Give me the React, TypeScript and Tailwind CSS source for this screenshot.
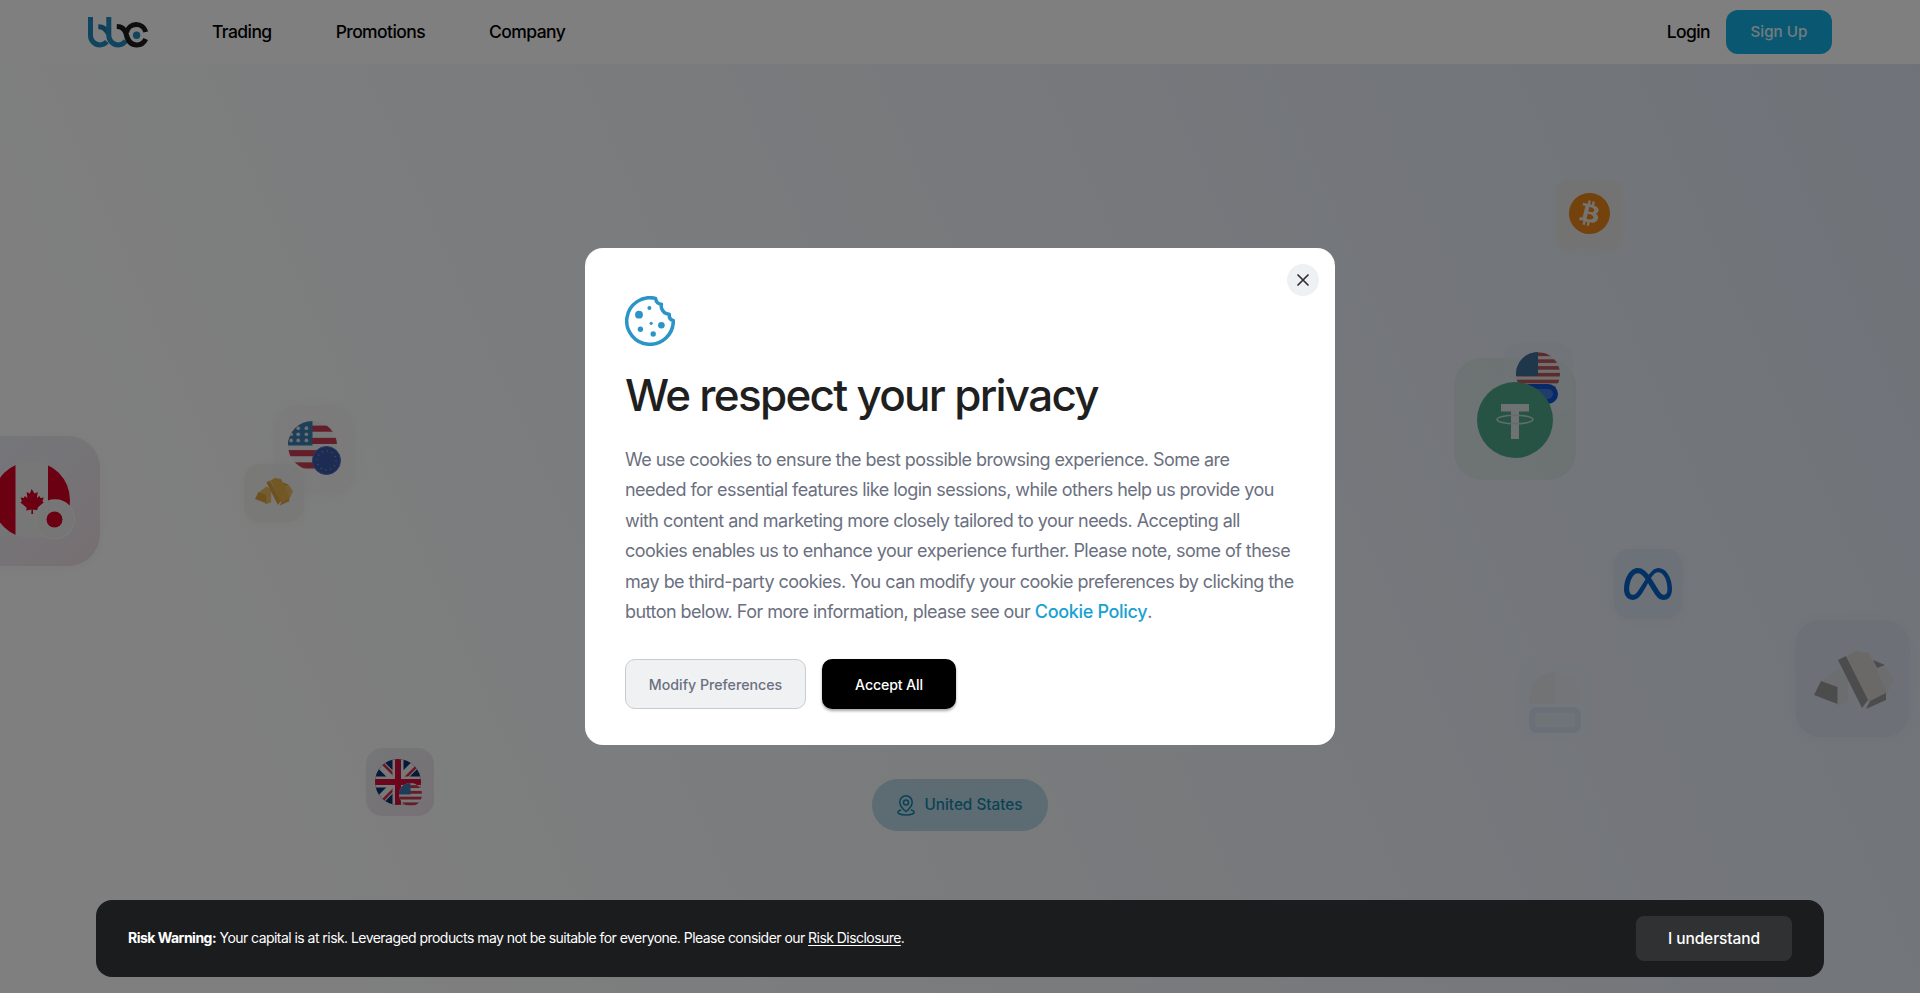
import { useState, type ReactNode } from "react";
import { SiBitcoin, SiMeta } from "react-icons/si";

const NAV = ["Trading", "Promotions", "Company"];

function Logo() {
  return (
    <svg width="60" height="31" viewBox="0 0 60 31" fill="none" strokeWidth="5">
      <g stroke="#2389bd">
        <path d="M2.5 0v18.400a9.500 9.500 0 0 0 9.500 9.500c2.600 0 5-1 6.900-3.200" />
        <path d="M10.300 9.700c4.900 0 8.200 2.400 10 7.300" stroke="#1f7ba9" />
        <path d="M20.800 0v18.400a9.500 9.500 0 0 0 9.500 9.500c3.300 0 5.900-1.500 7.600-4.200" />
      </g>
      <g stroke="#1d1d1d">
        <path d="M28.800 9.500c5.600 0 8.200 3.200 9.400 7.600 1.400 6.500 4.500 10.800 10.500 10.800 4.300 0 7.500-2.500 9-6" />
        <path d="M38.600 15.400a9.800 9.800 0 0 1 19.100-.4" />
      </g>
      <circle cx="48.600" cy="18.300" r="3.700" fill="#2389bd" />
    </svg>
  );
}

function CookieIcon() {
  return (
    <svg width="50" height="50" viewBox="0 0 50 50" fill="none">
      <path
        d="M30.6 2.4A23.3 23.3 0 1 0 48.3 24.4C45.600 24 44 22 44.200 18.200C40.400 18 37.400 15.400 36.400 11.800C36.200 10.600 36.200 9.400 36.400 8.200C33 8 31 5.800 30.600 2.400Z"
        stroke="#2b95c8" strokeWidth="3.5" strokeLinejoin="round"
      />
      <g fill="#2b95c8">
        <circle cx="14" cy="18.700" r="3.900" />
        <circle cx="24.400" cy="12" r="2" />
        <circle cx="26.200" cy="27.300" r="1.600" />
        <circle cx="36.400" cy="29.300" r="3.300" />
        <circle cx="15.400" cy="33.300" r="2.700" />
        <circle cx="28.200" cy="38" r="2.700" />
      </g>
    </svg>
  );
}

function PinIcon() {
  return (
    <svg width="18" height="21" viewBox="0 0 18 21" fill="none" stroke="currentColor" strokeWidth="1.5" strokeLinecap="round">
      <path d="M9 16.500C7 15 2.800 11.400 2.800 7a6.200 6.200 0 0 1 12.400 0c0 4.400-4.200 8-6.200 9.500Z" strokeLinejoin="round" />
      <circle cx="9" cy="7.400" r="2.500" />
      <path d="M3.600 15C1.900 15.500.9 16.200.9 17c0 1.700 3.600 3 8.100 3s8.100-1.300 8.100-3c0-.8-1-1.500-2.700-2" />
    </svg>
  );
}

function UsFlag({ id, size, blue = "#3f7fae", red = "#c83c55", dots = false }: { id: string; size: number; blue?: string; red?: string; dots?: boolean }) {
  return (
    <svg width={size} height={size} viewBox="0 0 48 48">
      <clipPath id={id}><circle cx="24" cy="24" r="24" /></clipPath>
      <g clipPath={`url(#${id})`}>
        <rect width="48" height="48" fill="#eef0f0" />
        {[0, 1, 2, 3].map(i => <rect key={i} y={i * 12 + 4.500} width="48" height="6" fill={red} />)}
        <rect width="24" height="24" fill={blue} />
        {dots && [9, 15, 21].map(y => [3, 10, 18].map(x => <circle key={`${x}-${y}`} cx={x} cy={y - 2} r="1.800" fill="#d5e2ea" />))}
      </g>
    </svg>
  );
}

// Thin-striped variant that sits behind the tether coin
function UsFlagFine({ size }: { size: number }) {
  return (
    <svg width={size} height={size} viewBox="0 0 44 44">
      <clipPath id="us-fine"><circle cx="22" cy="22" r="22" /></clipPath>
      <g clipPath="url(#us-fine)">
        <rect width="44" height="44" fill="#e0dcdc" />
        {[0, 1, 2, 3, 4, 5, 6].map(i => <rect key={i} y={i * 6.800 + 0.500} width="44" height="3.600" fill="#b8565a" />)}
        <rect width="22" height="24" fill="#3c6e94" />
      </g>
    </svg>
  );
}

function CanadaFlag() {
  return (
    <svg width="94" height="82" viewBox="-7 461 94 82">
      <clipPath id="ca"><circle cx="31.500" cy="500" r="38.500" /></clipPath>
      <g clipPath="url(#ca)">
        <rect x="-7" y="461" width="77" height="78" fill="#f0eff0" />
        <rect x="-7" y="461" width="22.500" height="78" fill="#d80027" />
        <rect x="48" y="461" width="22.500" height="78" fill="#d80027" />
      </g>
      <path
        d="M31.700 489l2.800 4.600 3.200-1.600-.8 6 2.700-2 .8 2 3.400-.4-1.400 3.600 1.600 1.400-6.400 5.200.6 2.600-5.300-.8.200 4.400h-1.800l.2-4.400-5.400.8.600-2.600-6.300-5.200 1.500-1.400-1.300-3.600 3.300.4.900-2 2.600 2-.8-6 3.200 1.600Z"
        fill="#d80027"
      />
      <circle cx="55" cy="519.500" r="19.500" fill="#efedee" stroke="#f4f2f4" strokeWidth="1.500" />
      <circle cx="54.500" cy="519.500" r="8" fill="#d80027" />
    </svg>
  );
}

function UkFlag() {
  return (
    <svg width="46" height="46" viewBox="0 0 46 46">
      <clipPath id="uk"><circle cx="23" cy="23" r="23" /></clipPath>
      <g clipPath="url(#uk)">
        <rect width="46" height="46" fill="#0e3270" />
        <path d="M0 0l46 46M46 0L0 46" stroke="#f0f0f0" strokeWidth="9" />
        <path d="M3 0l43 43M46 3L3 46" stroke="#d0334f" strokeWidth="2.600" />
        <path d="M23 0v46M0 23h46" stroke="#f0f0f0" strokeWidth="11" />
        <path d="M23 0v46M0 23h46" stroke="#d80c38" strokeWidth="6" />
      </g>
    </svg>
  );
}

function EuFlag() {
  return (
    <svg width="29" height="29" viewBox="0 0 29 29">
      <circle cx="14.500" cy="14.500" r="14" fill="#3a58a8" stroke="#4e6fc0" />
      <circle cx="14.500" cy="14.500" r="9.500" fill="none" stroke="#a0a070" strokeWidth="1.200" strokeDasharray="1.200 3.774" />
    </svg>
  );
}

function Ingots({ width, top, side, light }: { width: number; top: string; side: string; light: string }) {
  return (
    <svg width={width} height={(width * 60) / 80} viewBox="0 0 80 60">
      <path d="M7 31l17-13 10 6v27l-11 4Z" fill={light} />
      <path d="M58 10l14 6 8 12-7 15-22-10Z" fill={light} />
      <path d="M7 30l16.500 6v17L0 44Z" fill={side} />
      <path d="M33 5L42 0l13 2 18 40-19 9Z" fill={top} />
      <path d="M24 9l8-4 22 44-6 8Z" fill={side} />
      <path d="M59 9l12 5-8 3Z" fill={side} />
      <path d="M52 58l4-8 16-8v7Z" fill={side} />
    </svg>
  );
}

function TetherIcon() {
  return (
    <svg width="76" height="76" viewBox="0 0 76 76">
      <circle cx="38" cy="38" r="38" fill="#4fa78b" />
      <path d="M24 22h28v7.500H42V57h-8V29.500H24Z" fill="#dfe4e4" />
      <ellipse cx="38" cy="37.500" rx="18" ry="4.200" fill="none" stroke="#c4d8d2" strokeWidth="1.600" />
    </svg>
  );
}

// Rounded tile that floats on the hero background
function Tile({ className, children }: { className: string; children?: ReactNode }) {
  return <div className={`absolute flex items-center justify-center ${className}`}>{children}</div>;
}

function FloatingAssets() {
  return (
    <>
      <Tile className="left-[-30px] top-[436px] h-[130px] w-[130px] rounded-[32px] bg-linear-to-br from-[#ebeef6] via-[#ebe8ee] to-[#eedee3] shadow-[0_2px_10px_rgba(220,180,200,0.15)]">
        <div className="relative left-[5px] top-px"><CanadaFlag /></div>
      </Tile>

      <Tile className="left-[274px] top-[405px] h-[90px] w-[82px] rounded-3xl bg-[#f3f5f5]/70 shadow-[0_0_8px_rgba(243,245,245,0.5)]">
        <div className="relative -left-[3px] -top-[5px]">
          <UsFlag id="us-a" size={49} blue="#3f7fb0" dots />
          <div className="absolute left-[24px] top-[25px]"><EuFlag /></div>
        </div>
      </Tile>
      <Tile className="left-[244px] top-[464px] h-[58px] w-[60px] rounded-2xl bg-[#efefee]/80 shadow-[0_2px_8px_rgba(240,230,200,0.3)]">
        <div className="relative -top-px"><Ingots width={38} top="#e6b04a" side="#dba23c" light="#e8bb62" /></div>
      </Tile>

      <Tile className="left-[366px] top-[748px] h-[68px] w-[68px] rounded-2xl bg-linear-to-br from-[#e9edf2] to-[#ede2e8]">
        <div className="relative -left-[2px]">
          <UkFlag />
          <div className="absolute left-[24px] top-[24px]"><UsFlag id="us-b" size={23} blue="#3f77b0" /></div>
        </div>
      </Tile>

      <Tile className="left-[1557px] top-[180px] h-[68px] w-[65px] rounded-xl bg-[#e6e4de]/70 shadow-[0_3px_8px_rgba(232,224,208,0.4)]">
        <div className="relative -top-px rounded-full bg-[radial-gradient(circle,#ece6de_55%,transparent_56%)]"><SiBitcoin size={41} color="#e8861a" /></div>
      </Tile>

      <Tile className="left-[1454px] top-[358px] h-[122px] w-[122px] rounded-[28px] bg-[#d8e4e2]/80" />
      <Tile className="left-[1503px] top-[343px] h-[70px] w-[70px] rounded-2xl bg-[#dfe8f4]/40">
        <div className="relative -top-[4px]">
          <UsFlagFine size={44} />
          <div className="absolute left-[2px] top-[32px] h-[20px] w-[40px] rounded-full border-[5px] border-[#0f52d0] bg-[#3f78d8]" />
        </div>
      </Tile>
      <Tile className="left-[1454px] top-[359px] h-[122px] w-[122px]">
        <TetherIcon />
      </Tile>

      <Tile className="left-[1614px] top-[549px] h-[69px] w-[68px] rounded-2xl bg-[#d5e2ec]/80 shadow-[0_2px_6px_rgba(213,226,236,0.5)]">
        <SiMeta size={48} color="#0762c8" />
      </Tile>

      <Tile className="left-[1517px] top-[662px] h-[80px] w-[76px] rounded-2xl bg-[#e4eaf7]/40">
        <div className="flex flex-col gap-[3px]">
          <div className="flex h-8 w-13 overflow-hidden rounded-t-full bg-[#e9eaee]/60">
            <div className="w-1/2 bg-[#e2e7ea]" />
          </div>
          <div className="h-[26px] w-13 rounded-lg border-[6px] border-[#d3deec]/80 bg-[#dce6f1]/80" />
        </div>
      </Tile>

      <Tile className="left-[1795px] top-[620px] h-[117px] w-[115px] rounded-[26px] bg-[#d8dfec]/80 shadow-[0_0_8px_rgba(216,223,236,0.5)]">
        <div className="relative left-px top-[2px]"><Ingots width={80} top="#d4d2d1" side="#999999" light="#d8dadd" /></div>
      </Tile>
    </>
  );
}

function Header() {
  return (
    <header className="relative flex h-16 items-center bg-white px-22">
      <Logo />
      <nav className="ml-16 flex items-center gap-16 pt-px text-[17.5px] font-medium tracking-[-0.033em] text-black">
        {NAV.map(item => <a key={item} href="#">{item}</a>)}
      </nav>
      <div className="ml-auto flex items-center gap-4">
        <a href="#" className="pt-px text-[17.5px] font-medium tracking-[-0.035em] text-black">Login</a>
        <button className="h-11 w-[106px] rounded-xl bg-[#12aee2] text-[15.2px] font-medium text-white/90">Sign Up</button>
      </div>
    </header>
  );
}

function CookieDialog({ onClose }: { onClose: () => void }) {
  return (
    <div className="fixed inset-0 flex items-center justify-center bg-black/50">
      <div role="dialog" className="relative h-[497px] w-[750px] rounded-[18px] bg-white px-10 pt-12">
        <button onClick={onClose} className="absolute right-4 top-4 flex h-8 w-8 items-center justify-center rounded-full bg-[#eef0f2] text-[#2a2f38]">
          <svg width="12" height="12" viewBox="0 0 12 12" stroke="currentColor" strokeWidth="1.700" strokeLinecap="round">
            <path d="M1 1l10 10M11 1L1 11" />
          </svg>
        </button>
        <CookieIcon />
        <h2 className="mt-[23px] text-[44px] font-medium leading-[52px] tracking-[-0.039em] text-[#1f1f1f]">We respect your privacy</h2>
        <p className="mt-6 whitespace-nowrap text-[18px] leading-[30.4px] tracking-[-0.030em] text-[#6b7080]">
          We use cookies to ensure the best possible browsing experience. Some are<br />
          needed for essential features like login sessions, while others help us provide you<br />
          with content and marketing more closely tailored to your needs. Accepting all<br />
          cookies enables us to enhance your experience further. Please note, some of these<br />
          may be third-party cookies. You can modify your cookie preferences by clicking the<br />
          button below. For more information, please see our{" "}
          <a href="#" className="font-medium tracking-[-0.018em] text-[#17a2d0]">Cookie Policy</a>.
        </p>
        <div className="mt-8 flex gap-4 text-[14.2px] font-medium">
          <button className="h-[50px] w-[181px] rounded-[10px] border border-[#c9cbd1] bg-[#eff1f3] text-[#6b7080]">Modify Preferences</button>
          <button onClick={onClose} className="h-[50px] w-[134px] rounded-[10px] bg-black tracking-[-0.01em] text-white shadow-[0_2px_3px_rgba(0,0,0,0.35)]">Accept All</button>
        </div>
      </div>
    </div>
  );
}

function RiskBar({ onAccept }: { onAccept: () => void }) {
  return (
    <div className="fixed inset-x-24 bottom-4 flex h-[77px] items-center justify-between rounded-2xl bg-[#1b1c1e] px-8 text-white">
      <p className="pb-0.5 text-[14px] tracking-[-0.039em]">
        <b className="font-bold tracking-[-0.036em]">Risk Warning:</b> Your capital is at risk. Leveraged products may not be suitable for everyone. Please consider our{" "}
        <a href="#" className="underline underline-offset-2">Risk Disclosure</a>.
      </p>
      <button onClick={onAccept} className="h-[45px] w-[156px] rounded-lg bg-[#303133] pt-px text-[15.5px] font-medium tracking-[-0.006em]">I understand</button>
    </div>
  );
}

export default function App() {
  const [cookies, setCookies] = useState(true);
  const [risk, setRisk] = useState(true);

  return (
    <div className="relative flex h-[993px] flex-col overflow-hidden bg-white font-['Inter',sans-serif]">
      <Header />
      <main className="flex flex-1 flex-col items-center justify-end bg-[linear-gradient(66deg,#ffffff_12%,#f8fafc_32%,#f1f4f9_54%,#e8edf7_74%,#e4ebf5_86%,#dfe6f2_100%)] pb-[162px]">
        <button className="flex h-[52px] w-44 items-center justify-center gap-[9px] rounded-full bg-[#bad6e6] text-[15.3px] font-medium text-[#1585aa]">
          <PinIcon />
          United States
        </button>
      </main>
      <FloatingAssets />
      {cookies && <CookieDialog onClose={() => setCookies(false)} />}
      {risk && <RiskBar onAccept={() => setRisk(false)} />}
    </div>
  );
}
